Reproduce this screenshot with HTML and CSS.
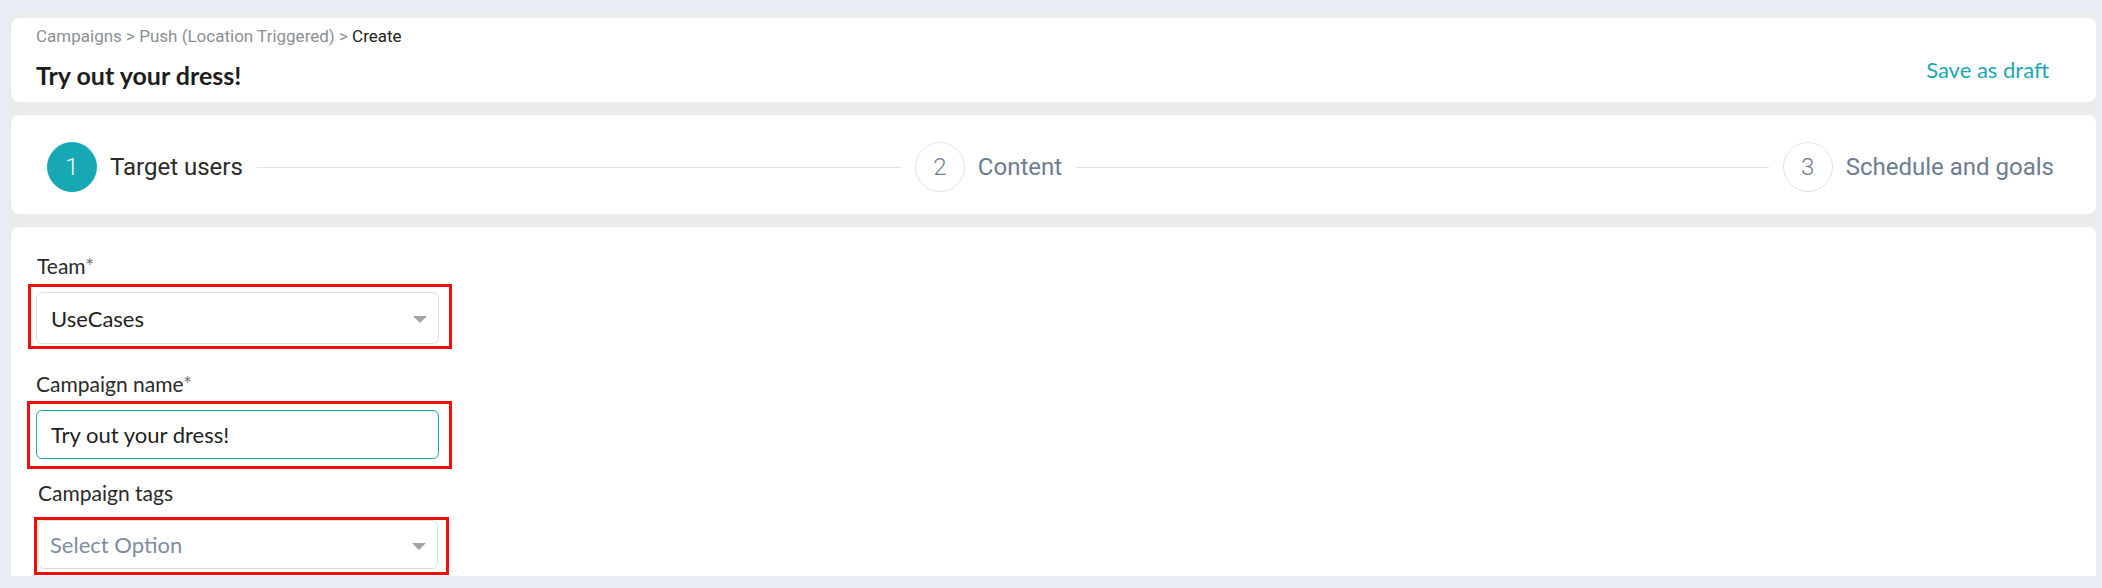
FILE: index.html
```html
<!DOCTYPE html>
<html lang="en">
<head>
<meta charset="utf-8">
<title>Create campaign</title>
<link rel="stylesheet" href="styles.css">
</head>
<body>
<div class="page">
  <header class="card head">
    <div class="head-main">
      <nav class="crumbs">Campaigns &gt; Push (Location Triggered) &gt; <span class="crumb-current">Create</span></nav>
      <h1 class="title">Try out your dress!</h1>
    </div>
    <a class="draft">Save as draft</a>
  </header>

  <section class="card steps">
    <div class="step step-active"><span class="step-num">1</span><span class="step-label">Target users</span><span class="step-line"></span></div>
    <div class="step"><span class="step-num">2</span><span class="step-label">Content</span><span class="step-line"></span></div>
    <div class="step step-last"><span class="step-num">3</span><span class="step-label">Schedule and goals</span></div>
  </section>

  <section class="card form">
    <div class="field">
      <label class="field-label label-team">Team<span class="req">*</span></label>
      <div class="mark mark-team">
        <div class="control select"><span class="value">UseCases</span><span class="caret"></span></div>
      </div>
    </div>
    <div class="field field-name">
      <label class="field-label label-name">Campaign name<span class="req">*</span></label>
      <div class="mark mark-name">
        <div class="control input"><span class="value">Try out your dress!</span></div>
      </div>
    </div>
    <div class="field field-tags">
      <label class="field-label label-tags">Campaign tags</label>
      <div class="mark mark-tags">
        <div class="control select select-tags"><span class="placeholder">Select Option</span><span class="caret"></span></div>
      </div>
    </div>
  </section>
</div>
</body>
</html>
```

FILE: styles.css
```css
* { box-sizing: border-box; }

html, body {
  margin: 0;
  padding: 0;
  background: #e8edf5;
  height: 588px;
  overflow: hidden;
}

.page {
  margin: 14px 6px 0 11px;
  padding-top: 4px;
  height: 562px;
  background: #ebebeb;
  display: flex;
  flex-direction: column;
  gap: 13px;
  overflow: hidden;
}

.card {
  background: #ffffff;
  border-radius: 8px;
}

/* header */
.head {
  height: 84px;
  flex: none;
  display: flex;
  justify-content: space-between;
  padding: 8px 47px 0 25px;
}

.crumbs {
  font-family: Roboto, "Liberation Sans", sans-serif;
  font-size: 17px;
  line-height: 20px;
  color: #8b8f96;
}

.crumb-current { color: #222222; }

.title {
  margin: 14px 0 0;
  font-family: Lato, "Liberation Sans", sans-serif;
  font-weight: 700;
  font-size: 25px;
  line-height: 30px;
  color: #1c1c1c;
}

.draft {
  align-self: center;
  margin-top: 10px;
  font-family: Lato, "Liberation Sans", sans-serif;
  font-size: 22px;
  color: #1aa7b4;
  cursor: pointer;
}

/* steps */
.steps {
  height: 99px;
  flex: none;
  display: flex;
  align-items: center;
  padding: 5px 42px 0 36px;
}

.step {
  flex: 1;
  display: flex;
  align-items: center;
  gap: 13px;
  padding-right: 14px;
}

.step-last {
  flex: none;
  padding-right: 0;
}

.step-num {
  flex: none;
  width: 50px;
  height: 50px;
  border-radius: 50%;
  border: 1.5px solid #dce2eb;
  display: flex;
  align-items: center;
  justify-content: center;
  font-family: Roboto, "Liberation Sans", sans-serif;
  font-weight: 300;
  font-size: 24px;
  color: #6c7c92;
  background: #ffffff;
}

.step-label {
  flex: none;
  font-family: Roboto, "Liberation Sans", sans-serif;
  font-weight: 400;
  font-size: 24px;
  color: #6c7c92;
}

.step-active .step-num {
  background: #17a8b5;
  border-color: #17a8b5;
  color: #ffffff;
}

.step-active .step-label { color: #2a2a2a; }

.step-line {
  flex: 1;
  height: 1px;
  background: #dde2ea;
  margin-left: 1px;
}

/* form */
.form {
  flex: 1;
  border-radius: 8px 8px 0 0;
  padding: 26px 0 0 0;
  display: flex;
  flex-direction: column;
  overflow: hidden;
  font-family: Lato, "Liberation Sans", sans-serif;
}

.field { display: flex; flex-direction: column; align-items: flex-start; }

.field-label {
  font-size: 21px;
  line-height: 25px;
  color: #2a2a2a;
}

.req { color: #777777; }

.label-team { margin-left: 26px; }
.label-name { margin-left: 25px; }
.label-tags { margin-left: 27px; }

.field-name { margin-top: 22px; }
.field-tags { margin-top: 11px; }

.mark {
  border: 3px solid #f20d0d;
}

.mark-team { margin: 6px 0 0 17px; padding: 5px 10px 2px 5px; }
.mark-name { margin: 5px 0 0 16px; padding: 6px 10px 7px 6px; }
.mark-tags { margin: 12px 0 0 23px; padding: 0 8px 3px 1px; }

.control {
  display: flex;
  align-items: center;
  justify-content: space-between;
  border: 1px solid #d8dee8;
  border-radius: 6px;
  background: #ffffff;
  padding: 0 11px 0 14px;
  font-size: 22px;
  width: 403px;
  height: 52px;
}

.input {
  height: 49px;
  border: 1.5px solid #1ca7b3;
}

.select-tags {
  width: 400px;
  height: 49px;
  padding-left: 11px;
}

.value { color: #1f1f1f; }
.placeholder { color: #7d8ca2; }

.caret {
  width: 0;
  height: 0;
  border-left: 7.5px solid transparent;
  border-right: 7.5px solid transparent;
  border-top: 7px solid #a3a3a3;
  margin-top: 3px;
}
```
